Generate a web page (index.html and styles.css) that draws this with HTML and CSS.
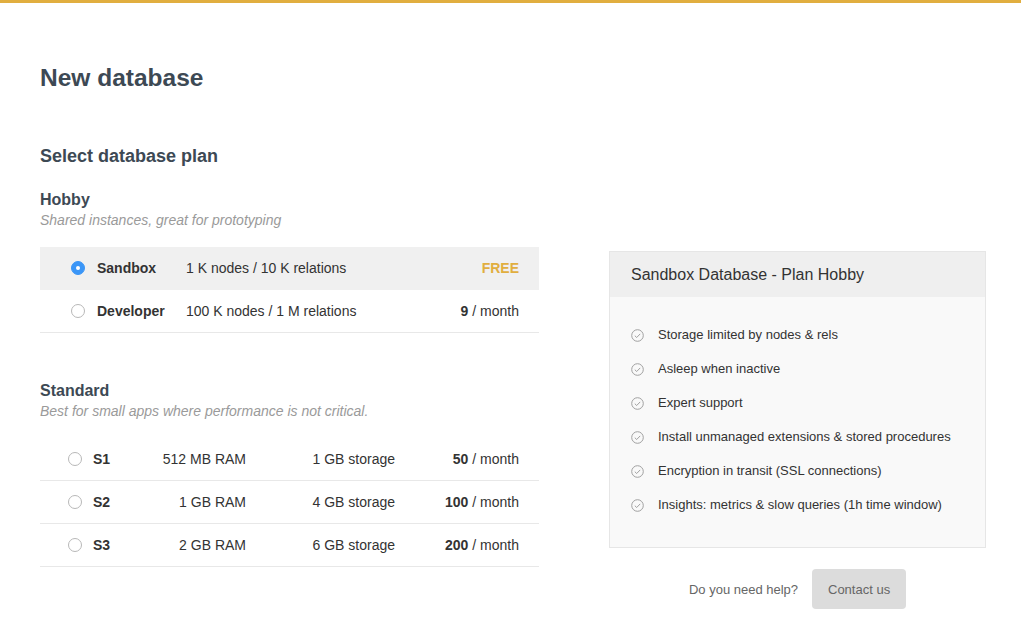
FILE: index.html
```html
<!DOCTYPE html>
<html lang="en">
<head>
<meta charset="utf-8">
<title>New database</title>
<link rel="stylesheet" href="styles.css">
</head>
<body>
<div class="topbar"></div>
<main class="page">
  <h1 class="title">New database</h1>
  <div class="content">
    <section class="plans">
      <h2 class="section-title">Select database plan</h2>

      <div class="tier">
        <h3 class="tier-name">Hobby</h3>
        <p class="tier-desc">Shared instances, great for prototyping</p>
        <div class="plan-list">
          <div class="plan-row hobby selected">
            <span class="radio-cell"><span class="radio checked"></span></span>
            <span class="plan-name">Sandbox</span>
            <span class="plan-spec">1 K nodes / 10 K relations</span>
            <span class="plan-price free">FREE</span>
          </div>
          <div class="plan-row hobby">
            <span class="radio-cell"><span class="radio"></span></span>
            <span class="plan-name">Developer</span>
            <span class="plan-spec">100 K nodes / 1 M relations</span>
            <span class="plan-price"><b>9</b> / month</span>
          </div>
        </div>
      </div>

      <div class="tier tier-standard">
        <h3 class="tier-name">Standard</h3>
        <p class="tier-desc">Best for small apps where performance is not critical.</p>
        <div class="plan-list plan-list-standard">
          <div class="plan-row standard">
            <span class="radio-cell"><span class="radio"></span></span>
            <span class="plan-name">S1</span>
            <span class="plan-num">512 MB RAM</span>
            <span class="plan-num">1 GB storage</span>
            <span class="plan-num"><b>50</b> / month</span>
          </div>
          <div class="plan-row standard">
            <span class="radio-cell"><span class="radio"></span></span>
            <span class="plan-name">S2</span>
            <span class="plan-num">1 GB RAM</span>
            <span class="plan-num">4 GB storage</span>
            <span class="plan-num"><b>100</b> / month</span>
          </div>
          <div class="plan-row standard">
            <span class="radio-cell"><span class="radio"></span></span>
            <span class="plan-name">S3</span>
            <span class="plan-num">2 GB RAM</span>
            <span class="plan-num">6 GB storage</span>
            <span class="plan-num"><b>200</b> / month</span>
          </div>
        </div>
      </div>
    </section>

    <aside class="summary">
      <div class="card">
        <div class="card-head">Sandbox Database - Plan Hobby</div>
        <ul class="features">
          <li><svg class="check" viewBox="0 0 13 13" width="13" height="13"><circle cx="6.5" cy="6.5" r="5.8"/><path d="M3.8 6.7 L5.7 8.5 L9.2 4.9"/></svg><span>Storage limited by nodes &amp; rels</span></li>
          <li><svg class="check" viewBox="0 0 13 13" width="13" height="13"><circle cx="6.5" cy="6.5" r="5.8"/><path d="M3.8 6.7 L5.7 8.5 L9.2 4.9"/></svg><span>Asleep when inactive</span></li>
          <li><svg class="check" viewBox="0 0 13 13" width="13" height="13"><circle cx="6.5" cy="6.5" r="5.8"/><path d="M3.8 6.7 L5.7 8.5 L9.2 4.9"/></svg><span>Expert support</span></li>
          <li><svg class="check" viewBox="0 0 13 13" width="13" height="13"><circle cx="6.5" cy="6.5" r="5.8"/><path d="M3.8 6.7 L5.7 8.5 L9.2 4.9"/></svg><span>Install unmanaged extensions &amp; stored procedures</span></li>
          <li><svg class="check" viewBox="0 0 13 13" width="13" height="13"><circle cx="6.5" cy="6.5" r="5.8"/><path d="M3.8 6.7 L5.7 8.5 L9.2 4.9"/></svg><span>Encryption in transit (SSL connections)</span></li>
          <li><svg class="check" viewBox="0 0 13 13" width="13" height="13"><circle cx="6.5" cy="6.5" r="5.8"/><path d="M3.8 6.7 L5.7 8.5 L9.2 4.9"/></svg><span>Insights: metrics &amp; slow queries (1h time window)</span></li>
        </ul>
      </div>
      <div class="help">
        <span class="help-text">Do you need help?</span>
        <button class="contact-btn" type="button">Contact us</button>
      </div>
    </aside>
  </div>
</main>
</body>
</html>
```

FILE: styles.css
```css
* { box-sizing: border-box; }

html, body {
  margin: 0;
  padding: 0;
  background: #ffffff;
}

body {
  font-family: "Liberation Sans", Arial, Helvetica, sans-serif;
  color: #333;
}

.topbar {
  height: 3px;
  background: #e1ae3f;
}

.page {
  padding: 0 40px;
}

.title {
  margin: 61px 0 0;
  font-size: 24.5px;
  line-height: 28px;
  font-weight: bold;
  color: #3d4954;
}

.content {
  display: flex;
  align-items: flex-start;
  margin-top: 53px;
}

.plans {
  width: 499px;
  flex: none;
}

.section-title {
  margin: 0;
  font-size: 18px;
  line-height: 22px;
  font-weight: bold;
  color: #3d4954;
}

.tier {
  margin-top: 23px;
}

.tier-standard {
  margin-top: 48px;
}

.tier-name {
  margin: 0;
  font-size: 16px;
  line-height: 20px;
  font-weight: bold;
  color: #3d4954;
}

.tier-desc {
  margin: 1px 0 0;
  font-size: 14px;
  line-height: 18px;
  font-style: italic;
  color: #9a9a9a;
}

.plan-list {
  margin-top: 18px;
}

.plan-list-standard {
  margin-top: 18px;
}

.plan-row {
  display: grid;
  align-items: center;
  height: 43px;
  border-bottom: 1px solid #e8e8e8;
  font-size: 14px;
  color: #333;
}

.plan-row.selected {
  background: #f0f0f0;
  border-bottom-color: #f0f0f0;
}

.plan-row.hobby {
  grid-template-columns: 26px 89px 1fr auto;
  padding: 0 20px 0 31px;
}

.plan-row.standard {
  grid-template-columns: 25px 50px 103px 149px 124px;
  padding: 0 20px 0 28px;
}

.radio-cell {
  display: flex;
  align-items: center;
}

.radio {
  width: 14px;
  height: 14px;
  border-radius: 50%;
  border: 1px solid #b8b8b8;
  background: #fff;
  display: inline-flex;
  align-items: center;
  justify-content: center;
}

.radio.checked {
  background: #3b96f7;
  border-color: #3b96f7;
}

.radio.checked::after {
  content: "";
  width: 4px;
  height: 4px;
  border-radius: 50%;
  background: #fff;
}

.plan-name {
  font-weight: bold;
  color: #333;
}

.plan-spec {
  color: #333;
}

.plan-price {
  text-align: right;
}

.plan-price.free {
  color: #e1ae3f;
  font-weight: bold;
}

.plan-num {
  text-align: right;
}

.summary {
  width: 377px;
  flex: none;
  margin-left: 70px;
  margin-top: 106px;
}

.card {
  border: 1px solid #e6e6e6;
  background: #f9f9f9;
}

.card-head {
  height: 45px;
  line-height: 45px;
  padding-left: 21px;
  background: #efefef;
  font-size: 16px;
  color: #333;
}

.features {
  list-style: none;
  margin: 0;
  padding: 28px 21px 32px;
}

.features li {
  display: flex;
  align-items: center;
  gap: 14px;
  font-size: 13px;
  line-height: 20px;
  color: #333;
  margin-bottom: 14px;
}

.features li:last-child {
  margin-bottom: 0;
}

.check {
  flex: none;
  fill: none;
  stroke: #a0a0a0;
  stroke-width: 1;
}

.help {
  display: flex;
  justify-content: center;
  align-items: center;
  gap: 14px;
  margin-top: 21px;
}

.help-text {
  font-size: 13px;
  color: #666;
}

.contact-btn {
  width: 94px;
  height: 40px;
  border: none;
  border-radius: 4px;
  background: #dcdcdc;
  font-family: "Liberation Sans", Arial, Helvetica, sans-serif;
  font-size: 13px;
  color: #666;
  padding: 0;
}
```
